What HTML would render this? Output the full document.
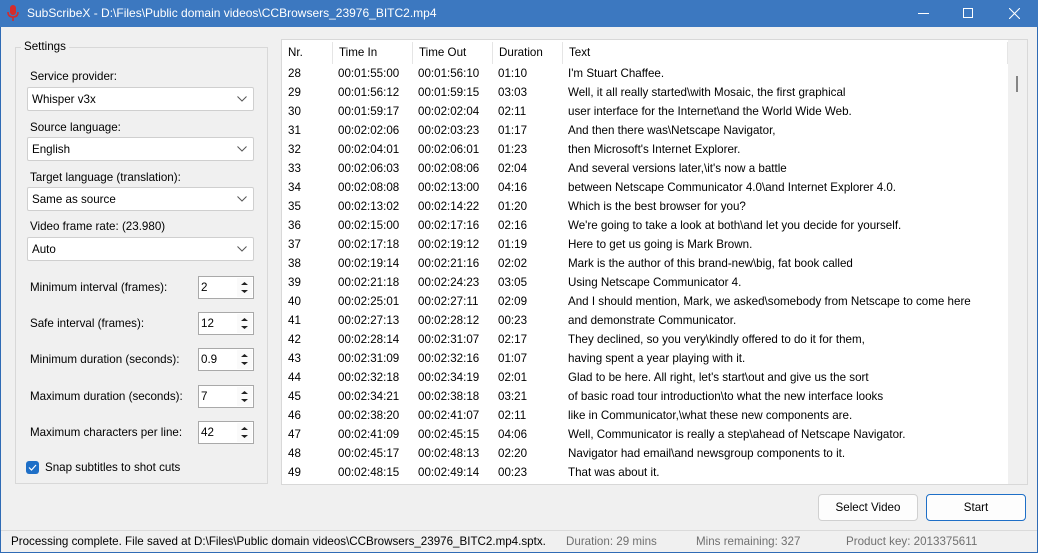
<!DOCTYPE html>
<html><head><meta charset="utf-8"><style>
*{box-sizing:border-box;margin:0;padding:0}
body{width:1038px;height:553px;overflow:hidden;background:#2f6bb5;font-family:"Liberation Sans",sans-serif;font-size:11.6px;color:#000;position:relative}
.win{position:absolute;left:1px;top:27px;width:1036px;height:525px;background:#f0f0f0}
.t{position:absolute;white-space:nowrap;line-height:14px}
.title{position:absolute;left:0;top:0;width:1038px;height:27px;background:#3c78c0;color:#fff}
.dd{position:absolute;left:27px;width:227px;height:24px;background:#fff;border:1px solid #cfcfcf;border-radius:2px}
.dd span{position:absolute;left:4px;top:5px}
.dd svg{position:absolute;right:6px;top:8px}
.sp{position:absolute;left:198px;width:56px;height:23px;background:#fff;border:1px solid #a9a9a9}
.sp span{position:absolute;left:2px;top:4px}
.sp .ar{position:absolute;right:1px;top:1px;width:15px;height:19px;background:#fafafa}
.row{position:absolute;left:0;height:19px;white-space:nowrap}
.row span{position:absolute;top:3px}
.btn{position:absolute;top:494px;width:100px;height:27px;background:#fdfdfd;border:1px solid #d0d0d0;border-radius:4px;text-align:center;line-height:25px}
</style></head><body>
<div class="title">
<svg style="position:absolute;left:7px;top:5px" width="12" height="17" viewBox="0 0 12 17"><rect x="3" y="0" width="6" height="10" rx="3" fill="#d52b2b"/><path d="M1 7 Q1 12 6 12 Q11 12 11 7" stroke="#d52b2b" stroke-width="1.6" fill="none"/><rect x="5.2" y="12" width="1.6" height="4" fill="#d52b2b"/></svg>
<div class="t" style="left:27px;top:6px;font-size:12px">SubScribeX - D:\Files\Public domain videos\CCBrowsers_23976_BITC2.mp4</div>
<div style="position:absolute;left:918px;top:13px;width:11px;height:1px;background:#fff"></div>
<div style="position:absolute;left:963px;top:8px;width:10px;height:10px;border:1px solid #fff"></div>
<svg style="position:absolute;left:1009px;top:8px" width="11" height="11"><path d="M0 0L11 11M11 0L0 11" stroke="#fff" stroke-width="1.1"/></svg>
</div>
<div class="win"></div>
<div style="position:absolute;left:15px;top:47px;width:253px;height:437px;border:1px solid #d8d8d8"></div>
<div class="t" style="left:21px;top:40px;background:#f0f0f0;padding:0 3px">Settings</div>
<div class="t" style="left:30px;top:70px">Service provider:</div>
<div class="dd" style="top:87px"><span>Whisper v3x</span><svg width="10" height="6"><path d="M0.5 0.5L5 5L9.5 0.5" stroke="#555" fill="none"/></svg></div>
<div class="t" style="left:30px;top:121px">Source language:</div>
<div class="dd" style="top:137px"><span>English</span><svg width="10" height="6"><path d="M0.5 0.5L5 5L9.5 0.5" stroke="#555" fill="none"/></svg></div>
<div class="t" style="left:30px;top:171px">Target language (translation):</div>
<div class="dd" style="top:187px"><span>Same as source</span><svg width="10" height="6"><path d="M0.5 0.5L5 5L9.5 0.5" stroke="#555" fill="none"/></svg></div>
<div class="t" style="left:30px;top:220px">Video frame rate: (23.980)</div>
<div class="dd" style="top:237px"><span>Auto</span><svg width="10" height="6"><path d="M0.5 0.5L5 5L9.5 0.5" stroke="#555" fill="none"/></svg></div>

<div class="t" style="left:30px;top:281px">Minimum interval (frames):</div>
<div class="sp" style="top:276px"><span>2</span><div class="ar"><svg width="15" height="19"><path d="M4 7L7.5 4L11 7Z M4 12L7.5 15L11 12Z" fill="#222"/></svg></div></div>
<div class="t" style="left:30px;top:317px">Safe interval (frames):</div>
<div class="sp" style="top:312px"><span>12</span><div class="ar"><svg width="15" height="19"><path d="M4 7L7.5 4L11 7Z M4 12L7.5 15L11 12Z" fill="#222"/></svg></div></div>
<div class="t" style="left:30px;top:353px">Minimum duration (seconds):</div>
<div class="sp" style="top:348px"><span>0.9</span><div class="ar"><svg width="15" height="19"><path d="M4 7L7.5 4L11 7Z M4 12L7.5 15L11 12Z" fill="#222"/></svg></div></div>
<div class="t" style="left:30px;top:390px">Maximum duration (seconds):</div>
<div class="sp" style="top:385px"><span>7</span><div class="ar"><svg width="15" height="19"><path d="M4 7L7.5 4L11 7Z M4 12L7.5 15L11 12Z" fill="#222"/></svg></div></div>
<div class="t" style="left:30px;top:426px">Maximum characters per line:</div>
<div class="sp" style="top:421px"><span>42</span><div class="ar"><svg width="15" height="19"><path d="M4 7L7.5 4L11 7Z M4 12L7.5 15L11 12Z" fill="#222"/></svg></div></div>
<div style="position:absolute;left:26px;top:461px;width:13px;height:13px;background:#1e6fc7;border-radius:3px"><svg width="13" height="13"><path d="M3 6.5L5.5 9L10 4" stroke="#fff" stroke-width="1.2" fill="none"/></svg></div>
<div class="t" style="left:45px;top:461px">Snap subtitles to shot cuts</div>

<div style="position:absolute;left:281px;top:39px;width:747px;height:446px;background:#fff;border:1px solid #d8d8d8;overflow:hidden">
<div style="position:absolute;left:726px;top:0;width:20px;height:446px;background:#f0f0f0"></div>
<div style="position:absolute;left:734px;top:36px;width:2px;height:16px;background:#858585"></div>
<div style="position:absolute;left:0;top:0;width:726px;height:24px">
<span class="t" style="left:6px;top:6px">Nr.</span><div style="position:absolute;left:50px;top:2px;width:1px;height:22px;background:#e5e5e5"></div>
<span class="t" style="left:57px;top:6px">Time In</span><div style="position:absolute;left:130px;top:2px;width:1px;height:22px;background:#e5e5e5"></div>
<span class="t" style="left:137px;top:6px">Time Out</span><div style="position:absolute;left:210px;top:2px;width:1px;height:22px;background:#e5e5e5"></div>
<span class="t" style="left:217px;top:6px">Duration</span><div style="position:absolute;left:280px;top:2px;width:1px;height:22px;background:#e5e5e5"></div>
<span class="t" style="left:287px;top:6px">Text</span><div style="position:absolute;left:725px;top:2px;width:1px;height:22px;background:#e5e5e5"></div>
</div>
<div id="rows"></div>
</div>

<div class="btn" style="left:818px">Select Video</div>
<div class="btn" style="left:926px;border-color:#1e6fc7">Start</div>

<div style="position:absolute;left:1px;top:530px;width:1036px;height:1px;background:#dadada"></div>
<div class="t" style="left:11px;top:535px">Processing complete. File saved at D:\Files\Public domain videos\CCBrowsers_23976_BITC2.mp4.sptx.</div>
<div class="t" style="left:566px;top:535px;color:#707070">Duration: 29 mins</div>
<div class="t" style="left:696px;top:535px;color:#707070">Mins remaining: 327</div>
<div class="t" style="left:846px;top:535px;color:#707070">Product key: 2013375611</div>
<script>
var d=[["28","00:01:55:00","00:01:56:10","01:10","I'm Stuart Chaffee."],
["29","00:01:56:12","00:01:59:15","03:03","Well, it all really started\\with Mosaic, the first graphical"],
["30","00:01:59:17","00:02:02:04","02:11","user interface for the Internet\\and the World Wide Web."],
["31","00:02:02:06","00:02:03:23","01:17","And then there was\\Netscape Navigator,"],
["32","00:02:04:01","00:02:06:01","01:23","then Microsoft's Internet Explorer."],
["33","00:02:06:03","00:02:08:06","02:04","And several versions later,\\it's now a battle"],
["34","00:02:08:08","00:02:13:00","04:16","between Netscape Communicator 4.0\\and Internet Explorer 4.0."],
["35","00:02:13:02","00:02:14:22","01:20","Which is the best browser for you?"],
["36","00:02:15:00","00:02:17:16","02:16","We're going to take a look at both\\and let you decide for yourself."],
["37","00:02:17:18","00:02:19:12","01:19","Here to get us going is Mark Brown."],
["38","00:02:19:14","00:02:21:16","02:02","Mark is the author of this brand-new\\big, fat book called"],
["39","00:02:21:18","00:02:24:23","03:05","Using Netscape Communicator 4."],
["40","00:02:25:01","00:02:27:11","02:09","And I should mention, Mark, we asked\\somebody from Netscape to come here"],
["41","00:02:27:13","00:02:28:12","00:23","and demonstrate Communicator."],
["42","00:02:28:14","00:02:31:07","02:17","They declined, so you very\\kindly offered to do it for them,"],
["43","00:02:31:09","00:02:32:16","01:07","having spent a year playing with it."],
["44","00:02:32:18","00:02:34:19","02:01","Glad to be here. All right, let's start\\out and give us the sort"],
["45","00:02:34:21","00:02:38:18","03:21","of basic road tour introduction\\to what the new interface looks"],
["46","00:02:38:20","00:02:41:07","02:11","like in Communicator,\\what these new components are."],
["47","00:02:41:09","00:02:45:15","04:06","Well, Communicator is really a step\\ahead of Netscape Navigator."],
["48","00:02:45:17","00:02:48:13","02:20","Navigator had email\\and newsgroup components to it."],
["49","00:02:48:15","00:02:49:14","00:23","That was about it."]];
var h="",x=[6,56,136,216,286];
d.forEach(function(r,i){h+='<div class="row" style="top:'+(24+i*19)+'px">';r.forEach(function(c,j){h+='<span style="left:'+x[j]+'px">'+c.replace(/</g,"&lt;")+'</span>'});h+='</div>'});
document.getElementById("rows").innerHTML=h;
</script>
</body></html>
